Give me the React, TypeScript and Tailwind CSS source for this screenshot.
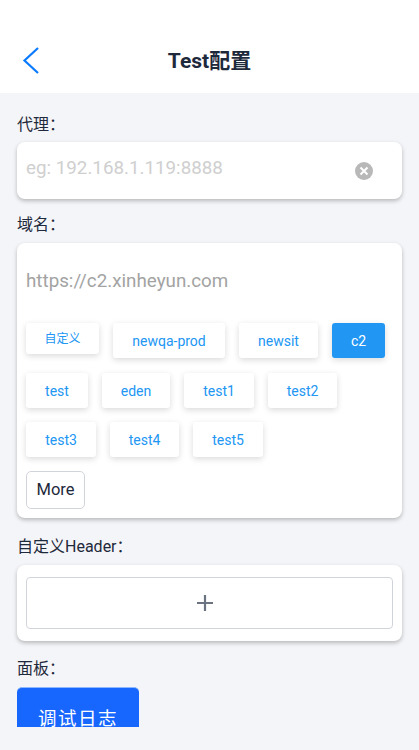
import React from 'react'

const chipRows = [
  [
    { label: '自定义', w: 'w-[73px]', small: true },
    { label: 'newqa-prod', w: 'w-[112px]' },
    { label: 'newsit', w: 'w-[79px]' },
    { label: 'c2', w: 'w-[53px]', active: true },
  ],
  [
    { label: 'test', w: 'w-[62px]' },
    { label: 'eden', w: 'w-[68px]' },
    { label: 'test1', w: 'w-[70px]' },
    { label: 'test2', w: 'w-[69px]' },
  ],
  [
    { label: 'test3', w: 'w-[70px]' },
    { label: 'test4', w: 'w-[69px]' },
    { label: 'test5', w: 'w-[70px]' },
  ],
]

const cardClass = 'rounded-[8px] bg-white shadow-[0_2px_4px_rgba(0,0,0,0.25)]'
const labelClass = 'h-[18px] text-[16px] leading-[18px] text-[#1e293b]'

const App: React.FC = () => {
  return (
    <div className="flex h-[750px] w-[419px] flex-col overflow-hidden bg-[#f4f5f8] font-['Roboto','Noto_Sans_CJK_SC',sans-serif]">
      <header className="flex h-[93px] shrink-0 items-end bg-white pb-[16px]">
        <div className="relative flex h-[30px] w-full items-center justify-center">
          <svg className="absolute left-[22px] top-0" width="18" height="28" viewBox="0 0 18 28" fill="none">
            <path d="M16 1 2.5 13.5 16 26" stroke="#0a7aff" strokeWidth="2.2" />
          </svg>
          <h1 className="text-[21px] font-bold text-[#1e293b]">Test配置</h1>
        </div>
      </header>

      <main className="flex h-[634px] shrink-0 flex-col overflow-hidden px-[17px] pt-[23px]">
        <div className={labelClass}>代理：</div>
        <div className={`${cardClass} mt-[8px] flex h-[57px] shrink-0 items-center pl-[9px] pr-[29px]`}>
          <span className="flex-1 -translate-y-[2px] text-[18.8px] text-[#cfcfcf]">eg: 192.168.1.119:8888</span>
          <span className="flex h-[18px] w-[18px] items-center justify-center rounded-full bg-[#b8b8b8]">
            <svg width="10" height="10" viewBox="0 0 10 10" fill="none">
              <path d="M1.5 1.5l7 7M8.5 1.5l-7 7" stroke="#fff" strokeWidth="2" />
            </svg>
          </span>
        </div>

        <div className={`${labelClass} mt-[17px]`}>域名：</div>
        <div className={`${cardClass} mt-[9px] h-[275px] shrink-0 px-[9px]`}>
          <div className="flex h-[76px] items-center text-[18.8px] text-[#a3a3a3]">https://c2.xinheyun.com</div>
          <div className="mt-[4px] flex flex-col gap-[14px]">
            {chipRows.map((row, i) => (
              <div key={i} className={`flex items-start gap-[14px] ${i === 1 ? 'mt-[1px]' : ''}`}>
                {row.map((chip) => (
                  <button
                    key={chip.label}
                    className={`${chip.w} ${chip.small ? 'h-[31px] text-[12px]' : 'h-[35px] pt-[1px] text-[14px]'} ${chip.active ? 'bg-[#2196f3] text-white' : 'bg-white text-[#2196f3]'} rounded-[3px] shadow-[0_2px_6px_rgba(0,0,0,0.15)]`}
                  >
                    {chip.label}
                  </button>
                ))}
              </div>
            ))}
            <button className="h-[38px] w-[59px] rounded-[5px] border border-[#d1d5db] bg-white pt-[1px] text-[16.5px] text-[#1e293b]">
              More
            </button>
          </div>
        </div>

        <div className={`${labelClass} mt-[20px]`}>自定义Header：</div>
        <div className={`${cardClass} mt-[9px] h-[76px] shrink-0 px-[9px] py-[12px]`}>
          <div className="flex h-[52px] items-center justify-center rounded-[4px] border border-[#d1d5db] pr-[9px]">
            <svg width="18" height="18" viewBox="0 0 18 18" fill="none">
              <path d="M9 1v16M1 9h16" stroke="#6b7280" strokeWidth="2.2" />
            </svg>
          </div>
        </div>

        <div className={`${labelClass} mt-[19px]`}>面板：</div>
        <div className="mt-[9px] h-[41px] w-[122px] shrink-0 overflow-hidden rounded-t-[5px] border-y border-[#8db8ff] bg-[#1767ff] pt-[20px] text-center text-[18.5px] leading-[22px] tracking-[1.5px] text-white">
          调试日志
        </div>
      </main>
    </div>
  )
}

export default App
